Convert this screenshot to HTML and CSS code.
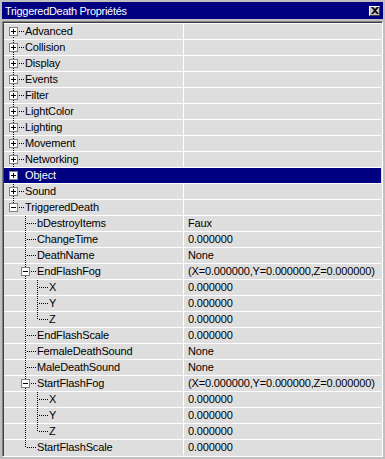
FILE: index.html
```html
<!DOCTYPE html>
<html lang="fr">
<head>
    <meta charset="UTF-8">
    <meta name="viewport" content="width=device-width, initial-scale=1.0">
    <title>TriggeredDeath Propriétés</title>
    <link rel="stylesheet" href="styles.css">
</head>
<body>
    <div class="window">
        <div class="titlebar">
            <span class="title">TriggeredDeath Propriétés</span>
            <button class="close" aria-label="Fermer">
                <svg width="8" height="7" viewBox="0 0 8 7"><path d="M0 0h2l2 2 2-2h2L5 3.5 8 7H6L4 5 2 7H0l3-3.5z" fill="#000"/></svg>
            </button>
        </div>
        <div class="panel">
            <div class="row"><div class="name"><span class="link first"><span class="box plus"></span></span><span class="label">Advanced</span></div><div class="value"></div></div>
            <div class="row"><div class="name"><span class="link"><span class="box plus"></span></span><span class="label">Collision</span></div><div class="value"></div></div>
            <div class="row"><div class="name"><span class="link"><span class="box plus"></span></span><span class="label">Display</span></div><div class="value"></div></div>
            <div class="row"><div class="name"><span class="link"><span class="box plus"></span></span><span class="label">Events</span></div><div class="value"></div></div>
            <div class="row"><div class="name"><span class="link"><span class="box plus"></span></span><span class="label">Filter</span></div><div class="value"></div></div>
            <div class="row"><div class="name"><span class="link"><span class="box plus"></span></span><span class="label">LightColor</span></div><div class="value"></div></div>
            <div class="row"><div class="name"><span class="link"><span class="box plus"></span></span><span class="label">Lighting</span></div><div class="value"></div></div>
            <div class="row"><div class="name"><span class="link"><span class="box plus"></span></span><span class="label">Movement</span></div><div class="value"></div></div>
            <div class="row"><div class="name"><span class="link"><span class="box plus"></span></span><span class="label">Networking</span></div><div class="value"></div></div>
            <div class="row selected"><div class="name"><span class="link"><span class="box plus"></span></span><span class="label">Object</span></div><div class="value"></div></div>
            <div class="row"><div class="name"><span class="link"><span class="box plus"></span></span><span class="label">Sound</span></div><div class="value"></div></div>
            <div class="row"><div class="name"><span class="link last"><span class="box minus"></span></span><span class="label">TriggeredDeath</span></div><div class="value"></div></div>

            <div class="row"><div class="name"><span class="blank"></span><span class="link"></span><span class="label">bDestroyItems</span></div><div class="value">Faux</div></div>
            <div class="row"><div class="name"><span class="blank"></span><span class="link"></span><span class="label">ChangeTime</span></div><div class="value">0.000000</div></div>
            <div class="row"><div class="name"><span class="blank"></span><span class="link"></span><span class="label">DeathName</span></div><div class="value">None</div></div>
            <div class="row"><div class="name"><span class="blank"></span><span class="link"><span class="box minus"></span></span><span class="label">EndFlashFog</span></div><div class="value">(X=0.000000,Y=0.000000,Z=0.000000)</div></div>
            <div class="row"><div class="name"><span class="blank"></span><span class="pipe"></span><span class="link"></span><span class="label">X</span></div><div class="value">0.000000</div></div>
            <div class="row"><div class="name"><span class="blank"></span><span class="pipe"></span><span class="link"></span><span class="label">Y</span></div><div class="value">0.000000</div></div>
            <div class="row"><div class="name"><span class="blank"></span><span class="pipe"></span><span class="link last"></span><span class="label">Z</span></div><div class="value">0.000000</div></div>
            <div class="row"><div class="name"><span class="blank"></span><span class="link"></span><span class="label">EndFlashScale</span></div><div class="value">0.000000</div></div>
            <div class="row"><div class="name"><span class="blank"></span><span class="link"></span><span class="label">FemaleDeathSound</span></div><div class="value">None</div></div>
            <div class="row"><div class="name"><span class="blank"></span><span class="link"></span><span class="label">MaleDeathSound</span></div><div class="value">None</div></div>
            <div class="row"><div class="name"><span class="blank"></span><span class="link"><span class="box minus"></span></span><span class="label">StartFlashFog</span></div><div class="value">(X=0.000000,Y=0.000000,Z=0.000000)</div></div>
            <div class="row"><div class="name"><span class="blank"></span><span class="pipe"></span><span class="link"></span><span class="label">X</span></div><div class="value">0.000000</div></div>
            <div class="row"><div class="name"><span class="blank"></span><span class="pipe"></span><span class="link"></span><span class="label">Y</span></div><div class="value">0.000000</div></div>
            <div class="row"><div class="name"><span class="blank"></span><span class="pipe"></span><span class="link last"></span><span class="label">Z</span></div><div class="value">0.000000</div></div>
            <div class="row"><div class="name"><span class="blank"></span><span class="link last"></span><span class="label">StartFlashScale</span></div><div class="value">0.000000</div></div>
        </div>
    </div>
</body>
</html>
```

FILE: styles.css
```css
body {
    margin: 0;
    background: #c0c0c0;
    font-family: "Liberation Sans", Arial, sans-serif;
    font-size: 11px;
    letter-spacing: -0.15px;
    color: #000;
}

.window {
    width: 385px;
    height: 459px;
    padding: 2px 2px 0 2px;
    box-sizing: border-box;
}

.titlebar {
    height: 17px;
    background: #000080;
    color: #fff;
    display: flex;
    align-items: center;
    justify-content: space-between;
    padding: 0 3px 0 3px;
    margin-bottom: 2px;
}

.title {
    font-size: 11px;
    letter-spacing: -0.3px;
}

.close {
    width: 11px;
    height: 10px;
    padding: 0;
    background: #c0c0c0;
    border: 1px solid;
    border-color: #fff #404040 #404040 #fff;
    display: flex;
    align-items: center;
    justify-content: center;
}

.panel {
    border: 1px solid;
    border-color: #808080 #fff #fff #808080;
    box-shadow: inset 1px 1px 0 #404040, inset -1px -1px 0 #dfdfdf;
    padding: 1px;
    background: #dedede;
}

.row {
    display: flex;
    height: 15px;
    border-top: 1px solid #fff;
}

.name {
    width: 180px;
    border-right: 1px solid #fff;
    display: flex;
    padding-left: 3px;
    box-sizing: border-box;
}

.value {
    flex: 1;
    padding-left: 4px;
    line-height: 15px;
    white-space: nowrap;
}

.label {
    line-height: 15px;
    white-space: nowrap;
}

.blank,
.pipe {
    width: 12px;
    flex: none;
}

.pipe {
    background: repeating-linear-gradient(#000 0 1px, transparent 1px 2px) 6px 0 / 1px 15px no-repeat;
}

.link {
    width: 18px;
    flex: none;
    background:
        repeating-linear-gradient(90deg, #000 0 1px, transparent 1px 2px) 8px 7px / 9px 1px no-repeat,
        repeating-linear-gradient(#000 0 1px, transparent 1px 2px) 6px 0 / 1px 15px no-repeat;
}

.link.first {
    background:
        repeating-linear-gradient(90deg, #000 0 1px, transparent 1px 2px) 8px 7px / 9px 1px no-repeat,
        repeating-linear-gradient(#000 0 1px, transparent 1px 2px) 6px 9px / 1px 6px no-repeat;
}

.link.last {
    background:
        repeating-linear-gradient(90deg, #000 0 1px, transparent 1px 2px) 8px 7px / 9px 1px no-repeat,
        repeating-linear-gradient(#000 0 1px, transparent 1px 2px) 6px 0 / 1px 8px no-repeat;
}

.box {
    display: block;
    width: 9px;
    height: 9px;
    margin: 3px 0 0 2px;
    box-sizing: border-box;
    border: 1px solid #808080;
    background-color: #fff;
}

.box.plus {
    background:
        linear-gradient(#000, #000) 1px 3px / 5px 1px no-repeat,
        linear-gradient(#000, #000) 3px 1px / 1px 5px no-repeat,
        #fff;
}

.box.minus {
    background:
        linear-gradient(#000, #000) 1px 3px / 5px 1px no-repeat,
        #fff;
}

.row.selected {
    background: #000080;
}

.row.selected .label {
    color: #fff;
}

.row.selected .name {
    border-right-color: #000080;
}
```
